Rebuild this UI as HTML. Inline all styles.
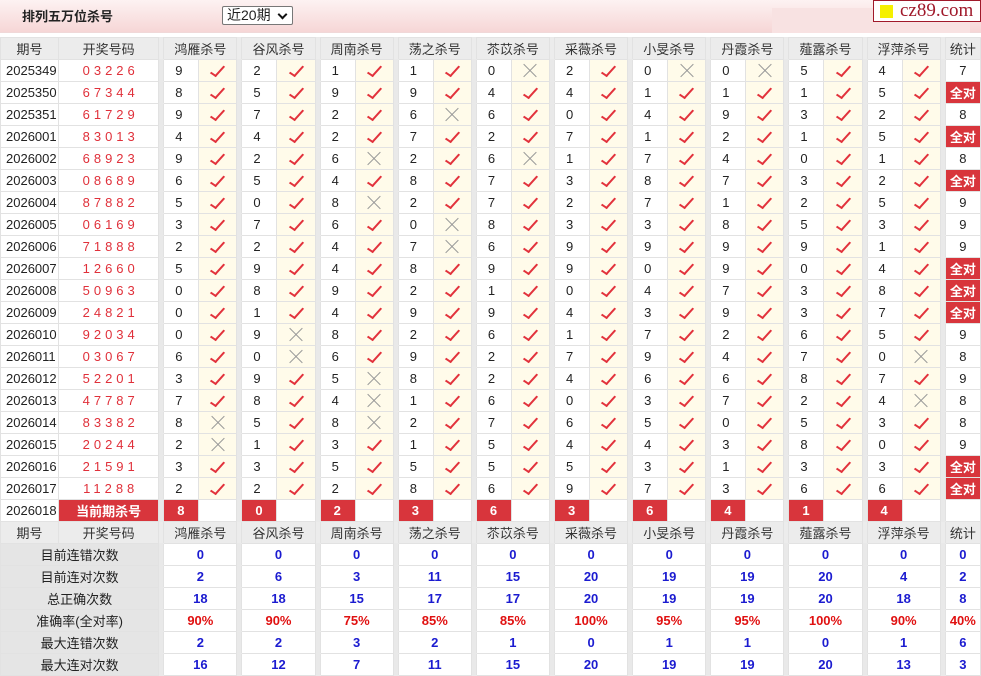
<!DOCTYPE html>
<html><head><meta charset="utf-8"><style>
*{margin:0;padding:0;box-sizing:border-box}
body{width:981px;height:675px;overflow:hidden;background:#fff;font-family:"Liberation Sans","Noto Sans CJK SC",sans-serif;font-size:13px;color:#222;position:relative}
.hd{position:absolute;left:0;top:0;width:981px;height:33px;background:linear-gradient(#fdf2f2,#f6d6d6);border-bottom:1px solid #f0d8d8}
.hd b{position:absolute;left:22px;top:6px;font-size:13px;color:#222}
.sel{position:absolute;left:222px;top:6px;width:71px;height:19px;border:1px solid #777;border-radius:2px;background:#fff;font-size:14px;padding-left:4px;line-height:17px}
.sel:after{content:"";position:absolute;right:6px;top:4px;width:5px;height:5px;border-right:2px solid #111;border-bottom:2px solid #111;transform:rotate(45deg)}
.pk{position:absolute;left:772px;top:8px;width:198px;height:25px;background:#f8e2e2}
.lg{position:absolute;left:873px;top:0;width:108px;height:22px;background:#fff;border:1px solid #a0192a;font-family:"Liberation Serif",serif;font-size:19px;color:#a0192a;line-height:19px;padding-left:26px}
.lg:before{content:"";position:absolute;left:6px;top:4px;width:13px;height:13px;background:#f5f000}
table{position:absolute;left:0;top:37px;border-collapse:collapse;table-layout:fixed;width:981px}
td{height:22px;border:1px solid #e2e2e2;padding:0;text-align:center;white-space:nowrap;overflow:hidden}
td.l{text-align:left;padding-left:5px}
td.n{color:#e0303a;letter-spacing:4px;padding-left:4px}
td.s{background:#e9e9e9;border-top-color:#e9e9e9;border-bottom-color:#e9e9e9}
td.y{background:#fffbea}
tr.h td{background:#ececec;color:#333}
tr.h td.y{background:#ececec}
td.v{text-align:left;padding-left:11px}
i.k{display:inline-block;width:7px;height:14px;border-right:2px solid #e2323c;border-bottom:2px solid #e2323c;transform:rotate(42deg) skewY(-8deg);margin-top:-4px;vertical-align:middle}
i.x{display:inline-block;width:14px;height:14px;position:relative;vertical-align:middle}
i.x:before,i.x:after{content:"";position:absolute;left:-2px;top:6px;width:18px;height:1px;background:#9a9a9a;transform:rotate(45deg)}
i.x:after{transform:rotate(-45deg)}
.a{background:#d8353c;color:#fff;font-weight:bold}
td.r{background:#d8353c;color:#fff;font-weight:bold;text-align:left;padding-left:13px}
tr.st td.lb{background:#e5e5e5}
tr.st td.b{color:#1b1bd0;font-weight:bold}
tr.st td.p{color:#e01010;font-weight:bold}
</style></head><body>
<div class="hd"><b>排列五万位杀号</b><div class="sel">近20期</div><div class="pk"></div></div>
<div class="lg">cz89.com</div>
<table>
<colgroup><col style="width:58px"><col style="width:100px"><col style="width:5px">
<col style="width:35px"><col style="width:38px"><col style="width:5px">
<col style="width:35px"><col style="width:38px"><col style="width:5px">
<col style="width:35px"><col style="width:38px"><col style="width:5px">
<col style="width:35px"><col style="width:38px"><col style="width:5px">
<col style="width:35px"><col style="width:38px"><col style="width:5px">
<col style="width:35px"><col style="width:38px"><col style="width:5px">
<col style="width:35px"><col style="width:38px"><col style="width:5px">
<col style="width:35px"><col style="width:38px"><col style="width:5px">
<col style="width:35px"><col style="width:38px"><col style="width:5px">
<col style="width:35px"><col style="width:38px"><col style="width:5px">
<col style="width:35px"></colgroup>
<tr class="h"><td>期号</td><td>开奖号码</td><td class="s"></td><td colspan="2">鸿雁杀号</td><td class="s"></td><td colspan="2">谷风杀号</td><td class="s"></td><td colspan="2">周南杀号</td><td class="s"></td><td colspan="2">荡之杀号</td><td class="s"></td><td colspan="2">苶苡杀号</td><td class="s"></td><td colspan="2">采薇杀号</td><td class="s"></td><td colspan="2">小旻杀号</td><td class="s"></td><td colspan="2">丹霞杀号</td><td class="s"></td><td colspan="2">薤露杀号</td><td class="s"></td><td colspan="2">浮萍杀号</td><td class="s"></td><td>统计</td></tr>
<tr><td class="l">2025349</td><td class="n">03226</td><td class="s"></td><td class="v">9</td><td class="y"><i class="k"></i></td><td class="s"></td><td class="v">2</td><td class="y"><i class="k"></i></td><td class="s"></td><td class="v">1</td><td class="y"><i class="k"></i></td><td class="s"></td><td class="v">1</td><td class="y"><i class="k"></i></td><td class="s"></td><td class="v">0</td><td class="y"><i class="x"></i></td><td class="s"></td><td class="v">2</td><td class="y"><i class="k"></i></td><td class="s"></td><td class="v">0</td><td class="y"><i class="x"></i></td><td class="s"></td><td class="v">0</td><td class="y"><i class="x"></i></td><td class="s"></td><td class="v">5</td><td class="y"><i class="k"></i></td><td class="s"></td><td class="v">4</td><td class="y"><i class="k"></i></td><td class="s"></td><td>7</td></tr>
<tr><td class="l">2025350</td><td class="n">67344</td><td class="s"></td><td class="v">8</td><td class="y"><i class="k"></i></td><td class="s"></td><td class="v">5</td><td class="y"><i class="k"></i></td><td class="s"></td><td class="v">9</td><td class="y"><i class="k"></i></td><td class="s"></td><td class="v">9</td><td class="y"><i class="k"></i></td><td class="s"></td><td class="v">4</td><td class="y"><i class="k"></i></td><td class="s"></td><td class="v">4</td><td class="y"><i class="k"></i></td><td class="s"></td><td class="v">1</td><td class="y"><i class="k"></i></td><td class="s"></td><td class="v">1</td><td class="y"><i class="k"></i></td><td class="s"></td><td class="v">1</td><td class="y"><i class="k"></i></td><td class="s"></td><td class="v">5</td><td class="y"><i class="k"></i></td><td class="s"></td><td class="a">全对</td></tr>
<tr><td class="l">2025351</td><td class="n">61729</td><td class="s"></td><td class="v">9</td><td class="y"><i class="k"></i></td><td class="s"></td><td class="v">7</td><td class="y"><i class="k"></i></td><td class="s"></td><td class="v">2</td><td class="y"><i class="k"></i></td><td class="s"></td><td class="v">6</td><td class="y"><i class="x"></i></td><td class="s"></td><td class="v">6</td><td class="y"><i class="k"></i></td><td class="s"></td><td class="v">0</td><td class="y"><i class="k"></i></td><td class="s"></td><td class="v">4</td><td class="y"><i class="k"></i></td><td class="s"></td><td class="v">9</td><td class="y"><i class="k"></i></td><td class="s"></td><td class="v">3</td><td class="y"><i class="k"></i></td><td class="s"></td><td class="v">2</td><td class="y"><i class="k"></i></td><td class="s"></td><td>8</td></tr>
<tr><td class="l">2026001</td><td class="n">83013</td><td class="s"></td><td class="v">4</td><td class="y"><i class="k"></i></td><td class="s"></td><td class="v">4</td><td class="y"><i class="k"></i></td><td class="s"></td><td class="v">2</td><td class="y"><i class="k"></i></td><td class="s"></td><td class="v">7</td><td class="y"><i class="k"></i></td><td class="s"></td><td class="v">2</td><td class="y"><i class="k"></i></td><td class="s"></td><td class="v">7</td><td class="y"><i class="k"></i></td><td class="s"></td><td class="v">1</td><td class="y"><i class="k"></i></td><td class="s"></td><td class="v">2</td><td class="y"><i class="k"></i></td><td class="s"></td><td class="v">1</td><td class="y"><i class="k"></i></td><td class="s"></td><td class="v">5</td><td class="y"><i class="k"></i></td><td class="s"></td><td class="a">全对</td></tr>
<tr><td class="l">2026002</td><td class="n">68923</td><td class="s"></td><td class="v">9</td><td class="y"><i class="k"></i></td><td class="s"></td><td class="v">2</td><td class="y"><i class="k"></i></td><td class="s"></td><td class="v">6</td><td class="y"><i class="x"></i></td><td class="s"></td><td class="v">2</td><td class="y"><i class="k"></i></td><td class="s"></td><td class="v">6</td><td class="y"><i class="x"></i></td><td class="s"></td><td class="v">1</td><td class="y"><i class="k"></i></td><td class="s"></td><td class="v">7</td><td class="y"><i class="k"></i></td><td class="s"></td><td class="v">4</td><td class="y"><i class="k"></i></td><td class="s"></td><td class="v">0</td><td class="y"><i class="k"></i></td><td class="s"></td><td class="v">1</td><td class="y"><i class="k"></i></td><td class="s"></td><td>8</td></tr>
<tr><td class="l">2026003</td><td class="n">08689</td><td class="s"></td><td class="v">6</td><td class="y"><i class="k"></i></td><td class="s"></td><td class="v">5</td><td class="y"><i class="k"></i></td><td class="s"></td><td class="v">4</td><td class="y"><i class="k"></i></td><td class="s"></td><td class="v">8</td><td class="y"><i class="k"></i></td><td class="s"></td><td class="v">7</td><td class="y"><i class="k"></i></td><td class="s"></td><td class="v">3</td><td class="y"><i class="k"></i></td><td class="s"></td><td class="v">8</td><td class="y"><i class="k"></i></td><td class="s"></td><td class="v">7</td><td class="y"><i class="k"></i></td><td class="s"></td><td class="v">3</td><td class="y"><i class="k"></i></td><td class="s"></td><td class="v">2</td><td class="y"><i class="k"></i></td><td class="s"></td><td class="a">全对</td></tr>
<tr><td class="l">2026004</td><td class="n">87882</td><td class="s"></td><td class="v">5</td><td class="y"><i class="k"></i></td><td class="s"></td><td class="v">0</td><td class="y"><i class="k"></i></td><td class="s"></td><td class="v">8</td><td class="y"><i class="x"></i></td><td class="s"></td><td class="v">2</td><td class="y"><i class="k"></i></td><td class="s"></td><td class="v">7</td><td class="y"><i class="k"></i></td><td class="s"></td><td class="v">2</td><td class="y"><i class="k"></i></td><td class="s"></td><td class="v">7</td><td class="y"><i class="k"></i></td><td class="s"></td><td class="v">1</td><td class="y"><i class="k"></i></td><td class="s"></td><td class="v">2</td><td class="y"><i class="k"></i></td><td class="s"></td><td class="v">5</td><td class="y"><i class="k"></i></td><td class="s"></td><td>9</td></tr>
<tr><td class="l">2026005</td><td class="n">06169</td><td class="s"></td><td class="v">3</td><td class="y"><i class="k"></i></td><td class="s"></td><td class="v">7</td><td class="y"><i class="k"></i></td><td class="s"></td><td class="v">6</td><td class="y"><i class="k"></i></td><td class="s"></td><td class="v">0</td><td class="y"><i class="x"></i></td><td class="s"></td><td class="v">8</td><td class="y"><i class="k"></i></td><td class="s"></td><td class="v">3</td><td class="y"><i class="k"></i></td><td class="s"></td><td class="v">3</td><td class="y"><i class="k"></i></td><td class="s"></td><td class="v">8</td><td class="y"><i class="k"></i></td><td class="s"></td><td class="v">5</td><td class="y"><i class="k"></i></td><td class="s"></td><td class="v">3</td><td class="y"><i class="k"></i></td><td class="s"></td><td>9</td></tr>
<tr><td class="l">2026006</td><td class="n">71888</td><td class="s"></td><td class="v">2</td><td class="y"><i class="k"></i></td><td class="s"></td><td class="v">2</td><td class="y"><i class="k"></i></td><td class="s"></td><td class="v">4</td><td class="y"><i class="k"></i></td><td class="s"></td><td class="v">7</td><td class="y"><i class="x"></i></td><td class="s"></td><td class="v">6</td><td class="y"><i class="k"></i></td><td class="s"></td><td class="v">9</td><td class="y"><i class="k"></i></td><td class="s"></td><td class="v">9</td><td class="y"><i class="k"></i></td><td class="s"></td><td class="v">9</td><td class="y"><i class="k"></i></td><td class="s"></td><td class="v">9</td><td class="y"><i class="k"></i></td><td class="s"></td><td class="v">1</td><td class="y"><i class="k"></i></td><td class="s"></td><td>9</td></tr>
<tr><td class="l">2026007</td><td class="n">12660</td><td class="s"></td><td class="v">5</td><td class="y"><i class="k"></i></td><td class="s"></td><td class="v">9</td><td class="y"><i class="k"></i></td><td class="s"></td><td class="v">4</td><td class="y"><i class="k"></i></td><td class="s"></td><td class="v">8</td><td class="y"><i class="k"></i></td><td class="s"></td><td class="v">9</td><td class="y"><i class="k"></i></td><td class="s"></td><td class="v">9</td><td class="y"><i class="k"></i></td><td class="s"></td><td class="v">0</td><td class="y"><i class="k"></i></td><td class="s"></td><td class="v">9</td><td class="y"><i class="k"></i></td><td class="s"></td><td class="v">0</td><td class="y"><i class="k"></i></td><td class="s"></td><td class="v">4</td><td class="y"><i class="k"></i></td><td class="s"></td><td class="a">全对</td></tr>
<tr><td class="l">2026008</td><td class="n">50963</td><td class="s"></td><td class="v">0</td><td class="y"><i class="k"></i></td><td class="s"></td><td class="v">8</td><td class="y"><i class="k"></i></td><td class="s"></td><td class="v">9</td><td class="y"><i class="k"></i></td><td class="s"></td><td class="v">2</td><td class="y"><i class="k"></i></td><td class="s"></td><td class="v">1</td><td class="y"><i class="k"></i></td><td class="s"></td><td class="v">0</td><td class="y"><i class="k"></i></td><td class="s"></td><td class="v">4</td><td class="y"><i class="k"></i></td><td class="s"></td><td class="v">7</td><td class="y"><i class="k"></i></td><td class="s"></td><td class="v">3</td><td class="y"><i class="k"></i></td><td class="s"></td><td class="v">8</td><td class="y"><i class="k"></i></td><td class="s"></td><td class="a">全对</td></tr>
<tr><td class="l">2026009</td><td class="n">24821</td><td class="s"></td><td class="v">0</td><td class="y"><i class="k"></i></td><td class="s"></td><td class="v">1</td><td class="y"><i class="k"></i></td><td class="s"></td><td class="v">4</td><td class="y"><i class="k"></i></td><td class="s"></td><td class="v">9</td><td class="y"><i class="k"></i></td><td class="s"></td><td class="v">9</td><td class="y"><i class="k"></i></td><td class="s"></td><td class="v">4</td><td class="y"><i class="k"></i></td><td class="s"></td><td class="v">3</td><td class="y"><i class="k"></i></td><td class="s"></td><td class="v">9</td><td class="y"><i class="k"></i></td><td class="s"></td><td class="v">3</td><td class="y"><i class="k"></i></td><td class="s"></td><td class="v">7</td><td class="y"><i class="k"></i></td><td class="s"></td><td class="a">全对</td></tr>
<tr><td class="l">2026010</td><td class="n">92034</td><td class="s"></td><td class="v">0</td><td class="y"><i class="k"></i></td><td class="s"></td><td class="v">9</td><td class="y"><i class="x"></i></td><td class="s"></td><td class="v">8</td><td class="y"><i class="k"></i></td><td class="s"></td><td class="v">2</td><td class="y"><i class="k"></i></td><td class="s"></td><td class="v">6</td><td class="y"><i class="k"></i></td><td class="s"></td><td class="v">1</td><td class="y"><i class="k"></i></td><td class="s"></td><td class="v">7</td><td class="y"><i class="k"></i></td><td class="s"></td><td class="v">2</td><td class="y"><i class="k"></i></td><td class="s"></td><td class="v">6</td><td class="y"><i class="k"></i></td><td class="s"></td><td class="v">5</td><td class="y"><i class="k"></i></td><td class="s"></td><td>9</td></tr>
<tr><td class="l">2026011</td><td class="n">03067</td><td class="s"></td><td class="v">6</td><td class="y"><i class="k"></i></td><td class="s"></td><td class="v">0</td><td class="y"><i class="x"></i></td><td class="s"></td><td class="v">6</td><td class="y"><i class="k"></i></td><td class="s"></td><td class="v">9</td><td class="y"><i class="k"></i></td><td class="s"></td><td class="v">2</td><td class="y"><i class="k"></i></td><td class="s"></td><td class="v">7</td><td class="y"><i class="k"></i></td><td class="s"></td><td class="v">9</td><td class="y"><i class="k"></i></td><td class="s"></td><td class="v">4</td><td class="y"><i class="k"></i></td><td class="s"></td><td class="v">7</td><td class="y"><i class="k"></i></td><td class="s"></td><td class="v">0</td><td class="y"><i class="x"></i></td><td class="s"></td><td>8</td></tr>
<tr><td class="l">2026012</td><td class="n">52201</td><td class="s"></td><td class="v">3</td><td class="y"><i class="k"></i></td><td class="s"></td><td class="v">9</td><td class="y"><i class="k"></i></td><td class="s"></td><td class="v">5</td><td class="y"><i class="x"></i></td><td class="s"></td><td class="v">8</td><td class="y"><i class="k"></i></td><td class="s"></td><td class="v">2</td><td class="y"><i class="k"></i></td><td class="s"></td><td class="v">4</td><td class="y"><i class="k"></i></td><td class="s"></td><td class="v">6</td><td class="y"><i class="k"></i></td><td class="s"></td><td class="v">6</td><td class="y"><i class="k"></i></td><td class="s"></td><td class="v">8</td><td class="y"><i class="k"></i></td><td class="s"></td><td class="v">7</td><td class="y"><i class="k"></i></td><td class="s"></td><td>9</td></tr>
<tr><td class="l">2026013</td><td class="n">47787</td><td class="s"></td><td class="v">7</td><td class="y"><i class="k"></i></td><td class="s"></td><td class="v">8</td><td class="y"><i class="k"></i></td><td class="s"></td><td class="v">4</td><td class="y"><i class="x"></i></td><td class="s"></td><td class="v">1</td><td class="y"><i class="k"></i></td><td class="s"></td><td class="v">6</td><td class="y"><i class="k"></i></td><td class="s"></td><td class="v">0</td><td class="y"><i class="k"></i></td><td class="s"></td><td class="v">3</td><td class="y"><i class="k"></i></td><td class="s"></td><td class="v">7</td><td class="y"><i class="k"></i></td><td class="s"></td><td class="v">2</td><td class="y"><i class="k"></i></td><td class="s"></td><td class="v">4</td><td class="y"><i class="x"></i></td><td class="s"></td><td>8</td></tr>
<tr><td class="l">2026014</td><td class="n">83382</td><td class="s"></td><td class="v">8</td><td class="y"><i class="x"></i></td><td class="s"></td><td class="v">5</td><td class="y"><i class="k"></i></td><td class="s"></td><td class="v">8</td><td class="y"><i class="x"></i></td><td class="s"></td><td class="v">2</td><td class="y"><i class="k"></i></td><td class="s"></td><td class="v">7</td><td class="y"><i class="k"></i></td><td class="s"></td><td class="v">6</td><td class="y"><i class="k"></i></td><td class="s"></td><td class="v">5</td><td class="y"><i class="k"></i></td><td class="s"></td><td class="v">0</td><td class="y"><i class="k"></i></td><td class="s"></td><td class="v">5</td><td class="y"><i class="k"></i></td><td class="s"></td><td class="v">3</td><td class="y"><i class="k"></i></td><td class="s"></td><td>8</td></tr>
<tr><td class="l">2026015</td><td class="n">20244</td><td class="s"></td><td class="v">2</td><td class="y"><i class="x"></i></td><td class="s"></td><td class="v">1</td><td class="y"><i class="k"></i></td><td class="s"></td><td class="v">3</td><td class="y"><i class="k"></i></td><td class="s"></td><td class="v">1</td><td class="y"><i class="k"></i></td><td class="s"></td><td class="v">5</td><td class="y"><i class="k"></i></td><td class="s"></td><td class="v">4</td><td class="y"><i class="k"></i></td><td class="s"></td><td class="v">4</td><td class="y"><i class="k"></i></td><td class="s"></td><td class="v">3</td><td class="y"><i class="k"></i></td><td class="s"></td><td class="v">8</td><td class="y"><i class="k"></i></td><td class="s"></td><td class="v">0</td><td class="y"><i class="k"></i></td><td class="s"></td><td>9</td></tr>
<tr><td class="l">2026016</td><td class="n">21591</td><td class="s"></td><td class="v">3</td><td class="y"><i class="k"></i></td><td class="s"></td><td class="v">3</td><td class="y"><i class="k"></i></td><td class="s"></td><td class="v">5</td><td class="y"><i class="k"></i></td><td class="s"></td><td class="v">5</td><td class="y"><i class="k"></i></td><td class="s"></td><td class="v">5</td><td class="y"><i class="k"></i></td><td class="s"></td><td class="v">5</td><td class="y"><i class="k"></i></td><td class="s"></td><td class="v">3</td><td class="y"><i class="k"></i></td><td class="s"></td><td class="v">1</td><td class="y"><i class="k"></i></td><td class="s"></td><td class="v">3</td><td class="y"><i class="k"></i></td><td class="s"></td><td class="v">3</td><td class="y"><i class="k"></i></td><td class="s"></td><td class="a">全对</td></tr>
<tr><td class="l">2026017</td><td class="n">11288</td><td class="s"></td><td class="v">2</td><td class="y"><i class="k"></i></td><td class="s"></td><td class="v">2</td><td class="y"><i class="k"></i></td><td class="s"></td><td class="v">2</td><td class="y"><i class="k"></i></td><td class="s"></td><td class="v">8</td><td class="y"><i class="k"></i></td><td class="s"></td><td class="v">6</td><td class="y"><i class="k"></i></td><td class="s"></td><td class="v">9</td><td class="y"><i class="k"></i></td><td class="s"></td><td class="v">7</td><td class="y"><i class="k"></i></td><td class="s"></td><td class="v">3</td><td class="y"><i class="k"></i></td><td class="s"></td><td class="v">6</td><td class="y"><i class="k"></i></td><td class="s"></td><td class="v">6</td><td class="y"><i class="k"></i></td><td class="s"></td><td class="a">全对</td></tr>
<tr><td class="l">2026018</td><td class="a">当前期杀号</td><td class="s"></td><td class="r">8</td><td></td><td class="s"></td><td class="r">0</td><td></td><td class="s"></td><td class="r">2</td><td></td><td class="s"></td><td class="r">3</td><td></td><td class="s"></td><td class="r">6</td><td></td><td class="s"></td><td class="r">3</td><td></td><td class="s"></td><td class="r">6</td><td></td><td class="s"></td><td class="r">4</td><td></td><td class="s"></td><td class="r">1</td><td></td><td class="s"></td><td class="r">4</td><td></td><td class="s"></td><td></td></tr>
<tr class="h"><td>期号</td><td>开奖号码</td><td class="s"></td><td colspan="2">鸿雁杀号</td><td class="s"></td><td colspan="2">谷风杀号</td><td class="s"></td><td colspan="2">周南杀号</td><td class="s"></td><td colspan="2">荡之杀号</td><td class="s"></td><td colspan="2">苶苡杀号</td><td class="s"></td><td colspan="2">采薇杀号</td><td class="s"></td><td colspan="2">小旻杀号</td><td class="s"></td><td colspan="2">丹霞杀号</td><td class="s"></td><td colspan="2">薤露杀号</td><td class="s"></td><td colspan="2">浮萍杀号</td><td class="s"></td><td>统计</td></tr>
<tr class="st"><td class="lb" colspan="2">目前连错次数</td><td class="s"></td><td colspan="2" class="b">0</td><td class="s"></td><td colspan="2" class="b">0</td><td class="s"></td><td colspan="2" class="b">0</td><td class="s"></td><td colspan="2" class="b">0</td><td class="s"></td><td colspan="2" class="b">0</td><td class="s"></td><td colspan="2" class="b">0</td><td class="s"></td><td colspan="2" class="b">0</td><td class="s"></td><td colspan="2" class="b">0</td><td class="s"></td><td colspan="2" class="b">0</td><td class="s"></td><td colspan="2" class="b">0</td><td class="s"></td><td class="b">0</td></tr>
<tr class="st"><td class="lb" colspan="2">目前连对次数</td><td class="s"></td><td colspan="2" class="b">2</td><td class="s"></td><td colspan="2" class="b">6</td><td class="s"></td><td colspan="2" class="b">3</td><td class="s"></td><td colspan="2" class="b">11</td><td class="s"></td><td colspan="2" class="b">15</td><td class="s"></td><td colspan="2" class="b">20</td><td class="s"></td><td colspan="2" class="b">19</td><td class="s"></td><td colspan="2" class="b">19</td><td class="s"></td><td colspan="2" class="b">20</td><td class="s"></td><td colspan="2" class="b">4</td><td class="s"></td><td class="b">2</td></tr>
<tr class="st"><td class="lb" colspan="2">总正确次数</td><td class="s"></td><td colspan="2" class="b">18</td><td class="s"></td><td colspan="2" class="b">18</td><td class="s"></td><td colspan="2" class="b">15</td><td class="s"></td><td colspan="2" class="b">17</td><td class="s"></td><td colspan="2" class="b">17</td><td class="s"></td><td colspan="2" class="b">20</td><td class="s"></td><td colspan="2" class="b">19</td><td class="s"></td><td colspan="2" class="b">19</td><td class="s"></td><td colspan="2" class="b">20</td><td class="s"></td><td colspan="2" class="b">18</td><td class="s"></td><td class="b">8</td></tr>
<tr class="st"><td class="lb" colspan="2">准确率(全对率)</td><td class="s"></td><td colspan="2" class="p">90%</td><td class="s"></td><td colspan="2" class="p">90%</td><td class="s"></td><td colspan="2" class="p">75%</td><td class="s"></td><td colspan="2" class="p">85%</td><td class="s"></td><td colspan="2" class="p">85%</td><td class="s"></td><td colspan="2" class="p">100%</td><td class="s"></td><td colspan="2" class="p">95%</td><td class="s"></td><td colspan="2" class="p">95%</td><td class="s"></td><td colspan="2" class="p">100%</td><td class="s"></td><td colspan="2" class="p">90%</td><td class="s"></td><td class="p">40%</td></tr>
<tr class="st"><td class="lb" colspan="2">最大连错次数</td><td class="s"></td><td colspan="2" class="b">2</td><td class="s"></td><td colspan="2" class="b">2</td><td class="s"></td><td colspan="2" class="b">3</td><td class="s"></td><td colspan="2" class="b">2</td><td class="s"></td><td colspan="2" class="b">1</td><td class="s"></td><td colspan="2" class="b">0</td><td class="s"></td><td colspan="2" class="b">1</td><td class="s"></td><td colspan="2" class="b">1</td><td class="s"></td><td colspan="2" class="b">0</td><td class="s"></td><td colspan="2" class="b">1</td><td class="s"></td><td class="b">6</td></tr>
<tr class="st"><td class="lb" colspan="2">最大连对次数</td><td class="s"></td><td colspan="2" class="b">16</td><td class="s"></td><td colspan="2" class="b">12</td><td class="s"></td><td colspan="2" class="b">7</td><td class="s"></td><td colspan="2" class="b">11</td><td class="s"></td><td colspan="2" class="b">15</td><td class="s"></td><td colspan="2" class="b">20</td><td class="s"></td><td colspan="2" class="b">19</td><td class="s"></td><td colspan="2" class="b">19</td><td class="s"></td><td colspan="2" class="b">20</td><td class="s"></td><td colspan="2" class="b">13</td><td class="s"></td><td class="b">3</td></tr>
</table>
</body></html>
